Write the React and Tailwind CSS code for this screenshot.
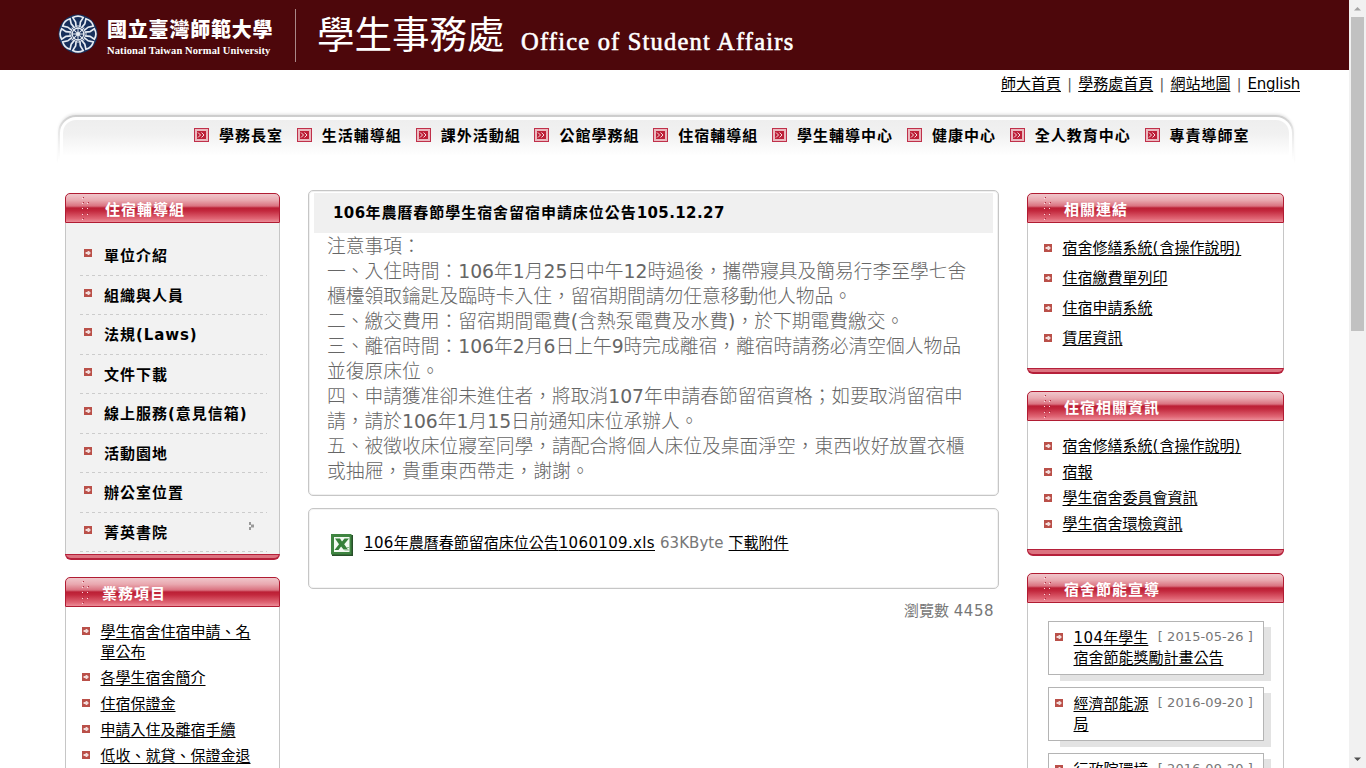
import React from "react";

const NAV = ["學務長室", "生活輔導組", "課外活動組", "公館學務組", "住宿輔導組", "學生輔導中心", "健康中心", "全人教育中心", "專責導師室"];
const MENU = ["單位介紹", "組織與人員", "法規(Laws)", "文件下載", "線上服務(意見信箱)", "活動園地", "辦公室位置", "菁英書院"];
const TOP = ["師大首頁", "學務處首頁", "網站地圖", "English"];
const ARTICLE = [
  "注意事項：",
  "一、入住時間：106年1月25日中午12時過後，攜帶寢具及簡易行李至學七舍",
  "櫃檯領取鑰匙及臨時卡入住，留宿期間請勿任意移動他人物品。",
  "二、繳交費用：留宿期間電費(含熱泵電費及水費)，於下期電費繳交。",
  "三、離宿時間：106年2月6日上午9時完成離宿，離宿時請務必清空個人物品",
  "並復原床位。",
  "四、申請獲准卻未進住者，將取消107年申請春節留宿資格；如要取消留宿申",
  "請，請於106年1月15日前通知床位承辦人。",
  "五、被徵收床位寢室同學，請配合將個人床位及桌面淨空，東西收好放置衣櫃",
  "或抽屜，貴重東西帶走，謝謝。",
];

function Mixed({ text, latin }) {
  return text.split(/([\x21-\x7e]+)/).map((s, i) => (i % 2 ? <span key={i} className={latin}>{s}</span> : s));
}

function Bullet({ className = "" }) {
  return (
    <svg className={"block shrink-0 " + className} width="8" height="8" viewBox="0 0 8 8" shapeRendering="crispEdges">
      <rect width="8" height="8" fill="#ba5049" />
      <path d="M1 3h6v2H1zM3 2h3v4H3z" fill="#d08c88" />
      <path d="M2 3h4v2H2zM4 2h1v4H4z" fill="#f3dddb" />
    </svg>
  );
}

function NavIcon() {
  return (
    <svg className="block shrink-0" width="15" height="14" viewBox="0 0 15 14">
      <rect width="15" height="14" fill="#c0304a" />
      <rect x="1" y="1" width="13" height="12" fill="#eab9bf" />
      <rect x="3" y="3" width="9" height="8" fill="#bd2038" />
      <path d="M4 4.5L6.5 7L4 9.5M7.5 4.5L10 7L7.5 9.5" stroke="#f6dde0" strokeWidth="1" fill="none" />
    </svg>
  );
}

function Dots() {
  return (
    <svg className="block shrink-0" width="10" height="26" viewBox="0 0 10 26" shapeRendering="crispEdges">
      <path d="M4 2h1v1H4zM4 7h1v1H4zM9 7h1v1H9zM4 12h1v1H4zM9 12h1v1H9zM4 18h1v1H4zM9 18h1v1H9zM4 23h1v1H4z" fill="#b32c40" />
      <path d="M3 3h1v1H3zM3 8h1v1H3zM8 8h1v1H8zM3 13h1v1H3zM8 13h1v1H8zM3 19h1v1H3zM8 19h1v1H8zM3 24h1v1H3z" fill="#f9dce0" />
    </svg>
  );
}

function Panel({ title, pad = "pl-[13px]", body, footer = "h-[6px]", children }) {
  return (
    <section className="flex flex-col">
      <header className="flex h-[30px] items-center rounded-t-[5px] border border-[#b01c33] bg-[linear-gradient(#f0c6cb_0%,#e9a9b0_22%,#da7280_43%,#bb1f35_50%,#c2283d_60%,#e06675_88%,#ec8d98_100%)] pl-[13px]">
        <Dots />
        <h2 className={"pt-[4px] text-[15px] leading-[28px] font-bold tracking-[1px] text-white " + pad}>{title}</h2>
      </header>
      <div className={"flex flex-col border-x border-[#c6c6c6] " + body}>{children}</div>
      <div className={"shrink-0 rounded-b-[6px] border-x border-t border-b-2 border-[#b5203a] bg-[#dc7380] " + footer} />
    </section>
  );
}

function PanelLink({ text }) {
  return (
    <li className="flex items-center gap-[10px]">
      <Bullet />
      <a className="-ml-[0.5px] pl-[1px] underline decoration-1 underline-offset-[2px]"><Mixed text={text} latin="tracking-[1px]" /></a>
    </li>
  );
}

function Notice({ title, date, rest }) {
  return (
    <div className="flex h-[66px] shrink-0 pl-[20px]">
      <div className="h-[60px] w-[223px] bg-[linear-gradient(#e3e3e3,#e3e3e3)] bg-[length:211px_54px] bg-[position:12px_6px] bg-no-repeat">
        <div className="flex h-[54px] w-[216px] border border-[#b4b4b4] bg-white pt-[6px] pl-[6px]">
          <Bullet className="mt-[5px]" />
          <div className="ml-[10.5px] w-[190px] leading-[21px]">
            <div className="flex h-[20px] items-center justify-between pr-[10px]">
              <a className="whitespace-nowrap underline decoration-1 underline-offset-[2px]"><Mixed text={title} latin="tracking-[0.4px]" /></a>
              <span className="-mt-[4px] text-[13px] tracking-[0.1px] whitespace-nowrap text-[#777]">[ {date} ]</span>
            </div>
            <a className="block whitespace-nowrap underline decoration-1 underline-offset-[2px]">{rest}</a>
          </div>
        </div>
      </div>
    </div>
  );
}

function Seal() {
  const spokes = [0, 45, 90, 135, 180, 225, 270, 315];
  return (
    <svg className="block" width="40" height="40" viewBox="-20 -20 40 40">
      <circle r="19.5" fill="#17305c" />
      <g fill="none" stroke="#e6ebf2">
        <circle r="5.8" strokeWidth="1.2" />
        <circle r="1.8" strokeWidth="1" fill="#e6ebf2" />
        {spokes.map((a) => (
          <g key={a} transform={`rotate(${a})`}>
            <path d="M0 -2V-9" strokeWidth="1" />
            <path d="M-1.8 -6.5L-2.400 -12L-5.200 -16.400Q0 -19.400 5.200 -16.400L2.400 -12L1.800 -6.5" strokeWidth="1.7" />
          </g>
        ))}
      </g>
    </svg>
  );
}

function Header() {
  return (
    <header className="flex h-[70px] bg-[#4d070b] pl-[58px] text-white">
      <div className="pt-[14px]"><Seal /></div>
      <div className="flex w-[186px] flex-col pt-[17px] pl-[9px]">
        <div className="h-[28px] text-[20px] leading-[26px] font-black tracking-[0.8px] whitespace-nowrap">國立臺灣師範大學</div>
        <div className="h-[12px] font-['Liberation_Serif',serif] text-[10.5px] leading-[11px] font-bold tracking-[0.1px] whitespace-nowrap">National Taiwan Normal University</div>
      </div>
      <div className="mt-[9px] ml-[11px] h-[53px] w-[1px] bg-[#a98788]" />
      <div className="ml-[21px] w-[204px] text-[37.5px] leading-[70px] whitespace-nowrap">學生事務處</div>
      <div className="pt-[27px] font-['Liberation_Serif',serif] text-[24.5px] leading-[30px] tracking-[1.2px] whitespace-nowrap [-webkit-text-stroke:0.6px_white]">Office of Student Affairs</div>
    </header>
  );
}

function Scrollbar() {
  return (
    <div className="flex h-[768px] w-[17px] flex-col items-center bg-[#f1f1f1]">
      <svg className="block h-[17px] shrink-0" width="17" height="17"><path d="M5 10.5L8.5 7L12 10.5Z" fill="#a3a3a3" /></svg>
      <div className="h-[314px] w-[13px] bg-[#c1c1c1]" />
      <svg className="mt-auto block h-[17px] shrink-0" width="17" height="17"><path d="M5 6.5L8.5 10L12 6.5Z" fill="#505050" /></svg>
    </div>
  );
}

export default function App() {
  return (
    <div className="flex h-[768px] w-[1366px] overflow-hidden bg-white font-['DejaVu_Sans','Noto_Sans_CJK_TC',sans-serif] text-[15px] text-black">
      <div className="h-[768px] w-[1349px] overflow-hidden">
        <Header />
        <nav className="flex h-[28px] items-center justify-end pr-[49px] leading-[28px]">
          {TOP.map((t, i) => (
            <React.Fragment key={t}>
              {i > 0 && <span className="w-[17.2px] text-center text-[14px] text-[#555]">|</span>}
              <a className={"underline decoration-1 underline-offset-[2px] " + (t === "English" ? "tracking-[-0.25px]" : "")}>{t}</a>
            </React.Fragment>
          ))}
        </nav>
        <div className="mt-[17px] ml-[58px] flex h-[50px] w-[1236px] items-start rounded-t-[18px] bg-[linear-gradient(#cccccc_0%,#e6e6e6_30%,#ffffff_90%)] px-[2px] pt-[2px] shadow-[0_-2px_3px_-1px_rgba(0,0,0,0.12)]">
          <div className="h-[48px] w-full rounded-t-[16px] bg-white px-[3px] pt-[3px]">
            <ul className="flex h-[45px] items-start rounded-t-[13px] bg-[linear-gradient(#eeeeee_0%,#f1f1f1_30%,#ffffff_80%)] pt-[4px] pl-[131px] leading-[24px] font-bold tracking-[1px]">
              {NAV.map((t) => (
                <li key={t} className="mr-[13.8px] flex h-[24px] items-start gap-[10px] whitespace-nowrap"><span className="pt-[4px]"><NavIcon /></span>{t}</li>
              ))}
            </ul>
          </div>
        </div>

        <main className="flex items-start pl-[65px]">
          <aside className="mt-[28px] flex w-[215px] shrink-0 flex-col gap-[17px]">
            <Panel title="住宿輔導組" pad="pl-[16px]" body="h-[331px] bg-[#f2f2f2] pt-[13px] pl-[14px]">
              <ul className="w-[187px] font-bold">
                {MENU.map((t, i) => (
                  <li key={t} className="flex h-[39.5px] items-start bg-[repeating-linear-gradient(90deg,#cccccc_0_3px,transparent_3px_6px)] bg-[length:100%_1px] bg-bottom bg-no-repeat pl-[4px]">
                    <Bullet className="mt-[13px]" />
                    <span className="ml-[12px] flex-1 pt-[8px] leading-[24px] tracking-[1px] whitespace-nowrap"><Mixed text={t} latin="tracking-[0.9px]" /></span>
                    {i === 7 && (
                      <svg className="mt-[9px] mr-[13px] block" width="6" height="8" viewBox="0 0 6 8"><path d="M1 0h2v3H1zM3 2.500h3v3H3zM1 5h2v3H1z" fill="#999" /></svg>
                    )}
                  </li>
                ))}
              </ul>
            </Panel>
            <Panel title="業務項目" body="h-[200px] bg-white pt-[15px] pl-[16px]">
              <ul>
                {["學生宿舍住宿申請、名\n單公布", "各學生宿舍簡介", "住宿保證金", "申請入住及離宿手續", "低收、就貸、保證金退"].map((t) => (
                  <li key={t} className="mb-[6px] flex leading-[20px]">
                    <Bullet className="mt-[5px]" />
                    <a className="ml-[10.5px] whitespace-pre underline decoration-1 underline-offset-[2px]">{t}</a>
                  </li>
                ))}
              </ul>
            </Panel>
          </aside>

          <section className="mt-[25px] ml-[28px] flex w-[691px] shrink-0 flex-col">
            <article className="h-[306px] rounded-[5px] border border-[#c6c6c6] px-[5px] pt-[2px] shadow-[inset_0_0_0_1px_#f0f0f0]">
              <h1 className="h-[40px] bg-[#f0f0f0] pl-[19px] leading-[40px] font-bold tracking-[0.95px] whitespace-nowrap">
                <Mixed text="106年農曆春節學生宿舍留宿申請床位公告105.12.27" latin="tracking-[0.4px]" />
              </h1>
              <div className="pt-[1px] pl-[13px] text-[18.75px] leading-[25px] font-light text-[#666]">
                {ARTICLE.map((t) => <p key={t} className="whitespace-nowrap"><Mixed text={t} latin="font-normal" /></p>)}
              </div>
            </article>
            <div className="mt-[12px] flex h-[81px] items-start rounded-[5px] border border-[#c6c6c6] pt-[24px] pl-[22px] shadow-[inset_0_0_0_1px_#f3f3f3]">
              <svg className="mt-[1px] block shrink-0" width="22" height="22" viewBox="0 0 22 22">
                <rect x="1" y="1" width="21" height="21" fill="#28502a" />
                <rect width="20.5" height="20.5" fill="#3f8541" />
                <rect x="3" y="3" width="15.500" height="15" fill="#f4faf3" />
                <path d="M4 4.500h5l2 3 2.500-3H18l-4.800 5.800L17 15.500h-4.500l-2.400-3L7.500 16H3.500l4.500-5.700z" fill="#37803a" />
                <path d="M13.500 16h4.500M16 13.500h2.500" stroke="#8cba8d" />
              </svg>
              <p className="ml-[11px] leading-[20px] whitespace-nowrap text-[#777]">
                <a className="text-black underline decoration-1 underline-offset-[2px]"><Mixed text="106年農曆春節留宿床位公告1060109.xls" latin="tracking-[0.35px]" /></a>
                <span className="mx-[5px] tracking-[0.05px]">63KByte</span>
                <a className="text-black underline decoration-1 underline-offset-[2px]">下載附件</a>
              </p>
            </div>
            <p className="mt-[11px] pr-[5px] text-right leading-[22px] text-[#777]">瀏覽數 <span className="tracking-[0.5px]">4458</span></p>
          </section>

          <aside className="mt-[28px] ml-[28px] flex w-[257px] shrink-0 flex-col">
            <Panel title="相關連結" body="h-[145px] pt-[10px] pl-[16px]">
              <ul className="leading-[30px]">
                {["宿舍修繕系統(含操作說明)", "住宿繳費單列印", "住宿申請系統", "賃居資訊"].map((t) => <PanelLink key={t} text={t} />)}
              </ul>
            </Panel>
            <div className="mt-[17px]">
              <Panel title="住宿相關資訊" body="h-[128px] pt-[12px] pl-[16px]" footer="h-[7px]">
                <ul className="leading-[26px]">
                  {["宿舍修繕系統(含操作說明)", "宿報", "學生宿舍委員會資訊", "學生宿舍環檢資訊"].map((t) => <PanelLink key={t} text={t} />)}
                </ul>
              </Panel>
            </div>
            <div className="mt-[17px]">
              <Panel title="宿舍節能宣導" body="h-[230px] pt-[18px]">
                <Notice title="104年學生" date="2015-05-26" rest="宿舍節能獎勵計畫公告" />
                <Notice title="經濟部能源" date="2016-09-20" rest="局" />
                <Notice title="行政院環境" date="2016-09-20" />
              </Panel>
            </div>
          </aside>
        </main>
      </div>
      <Scrollbar />
    </div>
  );
}
